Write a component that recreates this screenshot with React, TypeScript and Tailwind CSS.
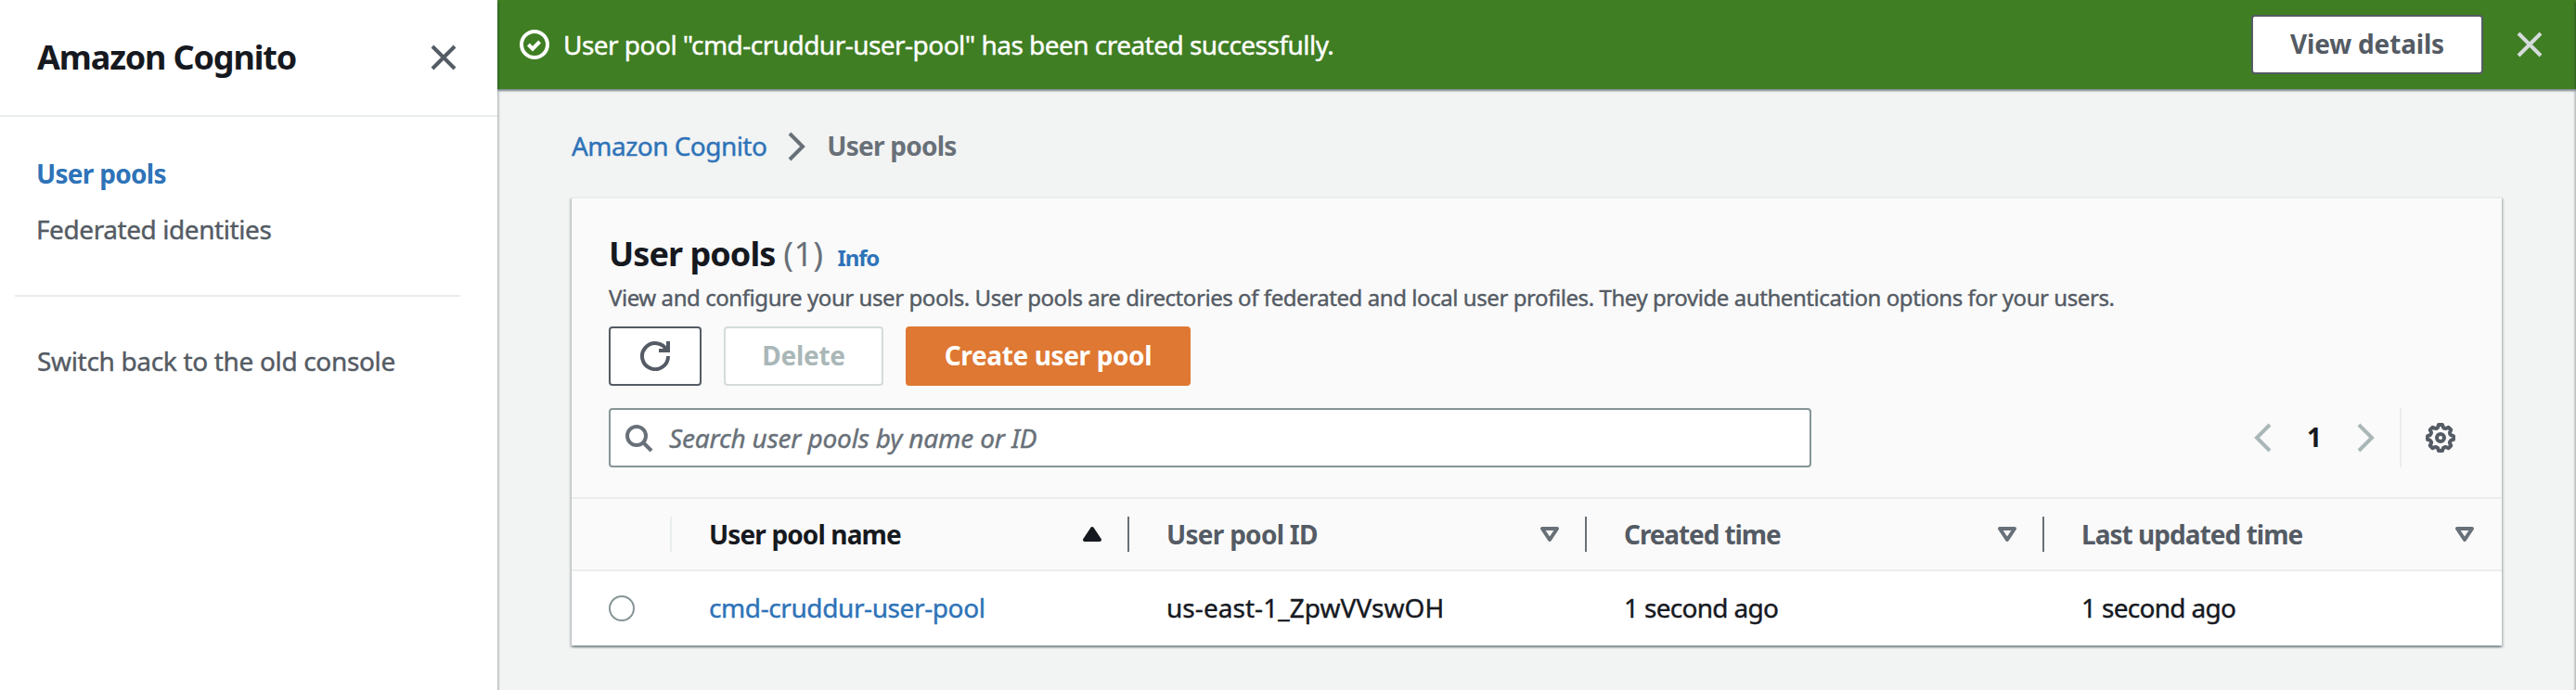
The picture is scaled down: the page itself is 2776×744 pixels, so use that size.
import type { ReactNode } from "react";

function Icon({ children, className = "" }: { children: ReactNode; className?: string }) {
  return (
    <svg
      viewBox="0 0 16 16"
      fill="none"
      stroke="currentColor"
      strokeWidth={2}
      className={`size-8 shrink-0 ${className}`}
    >
      {children}
    </svg>
  );
}

// Slightly heavier than the regular weight, without changing the text's width.
const sturdy = "[-webkit-text-stroke:0.4px_currentColor]";

const CloseIcon = ({ className }: { className?: string }) => (
  <Icon className={className}>
    <path d="m2 2 12 12M14 2 2 14" />
  </Icon>
);

const AngleRight = ({ className }: { className?: string }) => (
  <Icon className={className}>
    <path d="m4 1 7 7-7 7" />
  </Icon>
);

const AngleLeft = ({ className }: { className?: string }) => (
  <Icon className={className}>
    <path d="m12 1-7 7 7 7" />
  </Icon>
);

function GearIcon() {
  const point = (r: number, deg: number) => {
    const a = (deg * Math.PI) / 180;
    return `${(8 + r * Math.cos(a)).toFixed(2)} ${(8 + r * Math.sin(a)).toFixed(2)}`;
  };
  let d = "";
  for (let i = 0; i < 8; i++) {
    const a = i * 45;
    d += `${i === 0 ? "M" : "L"}${point(7.05, a - 8)}L${point(7.05, a + 8)}L${point(5.75, a + 15)}Q${point(5.3, a + 22.5)} ${point(5.75, a + 30)}`;
  }
  return (
    <Icon className="text-[#545b64]">
      <circle cx="8" cy="8" r="2" />
      <path d={d + "Z"} strokeLinejoin="round" />
    </Icon>
  );
}

function Sidebar() {
  return (
    <aside className="z-10 flex w-[536px] shrink-0 flex-col bg-white text-[28px] leading-10 text-[#545b64] shadow-[0_2px_2px_0_rgba(0,28,36,0.3),2px_2px_2px_0_rgba(0,28,36,0.15)]">
      <div className="flex h-[126px] items-center justify-between border-b-2 border-[#eaeded] pr-[42px] pl-10">
        <h2 className="pb-px text-[36px] font-bold tracking-[-1.15px] text-[#16191f]">Amazon Cognito</h2>
        <CloseIcon />
      </div>
      <nav className="flex flex-col pt-[41px]">
        <a className="pl-[39px] font-bold tracking-[-0.7px] text-[#2e73b8]">User pools</a>
        <a className={`mt-5 pl-[39px] tracking-[-0.42px] ${sturdy}`}>Federated identities</a>
        <hr className="mt-[51px] mr-10 ml-4 border-t-2 border-[#eaeded]" />
        <a className={`mt-[49px] pl-10 tracking-[-0.33px] ${sturdy}`}>Switch back to the old console</a>
      </nav>
    </aside>
  );
}

function Flashbar() {
  return (
    <div className="flex h-24 items-center bg-[#3f7e23] pr-[34px] pl-6 text-white shadow-[0_2px_2px_0_rgba(0,28,36,0.3),2px_2px_2px_0_rgba(0,28,36,0.15),-2px_2px_2px_0_rgba(0,28,36,0.15)]">
      <Icon>
        <circle cx="8" cy="8" r="7" />
        <path d="m4.7 8 2.3 2.3 3.8-3.8" />
      </Icon>
      <p className={`ml-[15px] flex-1 pb-px text-[28px] leading-10 tracking-[-0.53px] ${sturdy}`}>
        User pool "cmd-cruddur-user-pool" has been created successfully.
      </p>
      <button className="h-16 w-[250px] rounded-[4px] border-2 border-[#545b64] bg-white pb-[2px] text-[28px] font-bold tracking-[-0.18px] text-[#545b64]">
        View details
      </button>
      <CloseIcon className="ml-[34px] text-[#d5dbdb]" />
    </div>
  );
}

function Toolbar() {
  return (
    <div className="h-[324px] bg-[#fafafa] px-10 pt-10">
      <div className="flex h-10 items-baseline leading-10">
        <h1 className="text-[36px] font-bold tracking-[-0.95px] text-[#16191f]">User pools</h1>
        <span className="ml-[9px] text-[36px] tracking-[0.3px] text-[#687078]">(1)</span>
        <a className="ml-[15px] text-[24px] font-bold tracking-[-1.1px] text-[#2e73b8]">Info</a>
      </div>
      <p className={`mt-[7px] text-[24px] leading-10 tracking-[-0.43px] text-[#545b64] ${sturdy}`}>
        View and configure your user pools. User pools are directories of federated and local user profiles. They
        provide authentication options for your users.
      </p>
      <div className="mt-[11px] flex gap-6 text-[28px] font-bold">
        <button className="flex h-16 w-[100px] items-center justify-center rounded-[4px] border-2 border-[#545b64] bg-white text-[#545b64]">
          <Icon>
            <path d="M10 5h5V0" />
            <path d="M15 8a7 7 0 1 1-.7-3" />
          </Icon>
        </button>
        <button className="h-16 w-[172px] rounded-[4px] border-2 border-[#d5dbdb] bg-white pb-[2px] tracking-[-0.28px] text-[#aab7b8]">
          Delete
        </button>
        <button className="h-16 w-[307px] rounded-[4px] bg-[#de7832] pb-[2px] tracking-[-0.37px] text-white">
          Create user pool
        </button>
      </div>
      <div className="mt-6 flex h-16 items-center">
        <div className="flex h-16 w-[1296px] items-center rounded-[4px] border-2 border-[#879596] bg-white pl-[14px] text-[#687078]">
          <Icon>
            <circle cx="7" cy="7" r="5" />
            <path d="m15 15-4.5-4.5" />
          </Icon>
          <span className={`ml-[17px] pb-px text-[28px] leading-10 tracking-[-0.17px] italic ${sturdy}`}>
            Search user pools by name or ID
          </span>
        </div>
        <AngleLeft className="ml-[470px] text-[#aab7b8]" />
        <span className="w-20 pb-[2px] text-center text-[28px] font-bold text-[#16191f]">1</span>
        <AngleRight className="text-[#aab7b8]" />
        <div className="mr-[26px] ml-5 h-16 w-[2px] bg-[#eaeded]" />
        <GearIcon />
      </div>
    </div>
  );
}

const columns = [
  { label: "User pool name", tracking: "tracking-[-0.87px]", sorted: true },
  { label: "User pool ID", tracking: "tracking-[-0.72px]", sorted: false },
  { label: "Created time", tracking: "tracking-[-1.1px]", sorted: false },
  { label: "Last updated time", tracking: "tracking-[-0.96px]", sorted: false },
];

function PoolsTable() {
  return (
    <div className="text-[28px] leading-[38px]">
      <div className="grid h-20 grid-cols-[108px_repeat(4,493px)] items-center border-y-2 border-[#eaeded] bg-[#fafafa] font-bold">
        <div className="h-[38px] border-r-2 border-[#eaeded]" />
        {columns.map((c, i) => (
          <div
            key={c.label}
            className={`flex h-[38px] items-center justify-between pl-10 ${
              i < 3 ? "border-r-2 border-[#687078] pr-[22px]" : "pr-6"
            } ${c.sorted ? "text-[#16191f]" : "text-[#545b64]"}`}
          >
            <span className={`pb-px ${c.tracking}`}>{c.label}</span>
            {c.sorted ? (
              <Icon>
                <path d="M4 11h8L8 5z" fill="currentColor" strokeLinejoin="round" />
              </Icon>
            ) : (
              <Icon className="text-[#687078]">
                <path d="M4 5h8l-4 6z" strokeLinejoin="round" />
              </Icon>
            )}
          </div>
        ))}
      </div>
      <div className={`grid h-20 grid-cols-[108px_repeat(4,493px)] items-center text-[#16191f] ${sturdy}`}>
        <div className="pl-10">
          <div className="size-7 rounded-full border-2 border-[#879596]" />
        </div>
        <a className="pb-[2px] pl-10 tracking-[-0.4px] text-[#2e73b8]">cmd-cruddur-user-pool</a>
        <span className="pb-[2px] pl-10 tracking-[0.05px]">us-east-1_ZpwVVswOH</span>
        <span className="pb-[2px] pl-10 tracking-[-0.69px]">1 second ago</span>
        <span className="pb-[2px] pl-10 tracking-[-0.69px]">1 second ago</span>
      </div>
    </div>
  );
}

export default function App() {
  return (
    <div className="flex h-[744px] w-[2776px] overflow-hidden bg-[#f2f3f3] font-['Noto_Sans',sans-serif]">
      <Sidebar />
      <main className="flex w-[2240px] shrink-0 flex-col">
        <Flashbar />
        <div className="flex h-[116px] items-center pl-20 text-[28px] leading-10">
          <div className="flex items-center pt-[7px]">
            <a className={`pb-[2px] tracking-[-0.54px] text-[#2e73b8] ${sturdy}`}>Amazon Cognito</a>
            <AngleRight className="ml-[17px] text-[#687078]" />
            <span className="ml-4 pb-[2px] font-bold tracking-[-0.75px] text-[#687078]">User pools</span>
          </div>
        </div>
        <section className="mx-20 border-t-2 border-[#eaeded] bg-white shadow-[0_2px_2px_0_rgba(0,28,36,0.3),2px_2px_2px_0_rgba(0,28,36,0.15),-2px_2px_2px_0_rgba(0,28,36,0.15)]">
          <div className="-mb-[2px]">
            <Toolbar />
          </div>
          <PoolsTable />
        </section>
      </main>
      <div className="z-10 -mr-4 w-4 shrink-0 bg-white shadow-[0_2px_2px_0_rgba(0,28,36,0.3),-2px_2px_2px_0_rgba(0,28,36,0.15)]" />
    </div>
  );
}
